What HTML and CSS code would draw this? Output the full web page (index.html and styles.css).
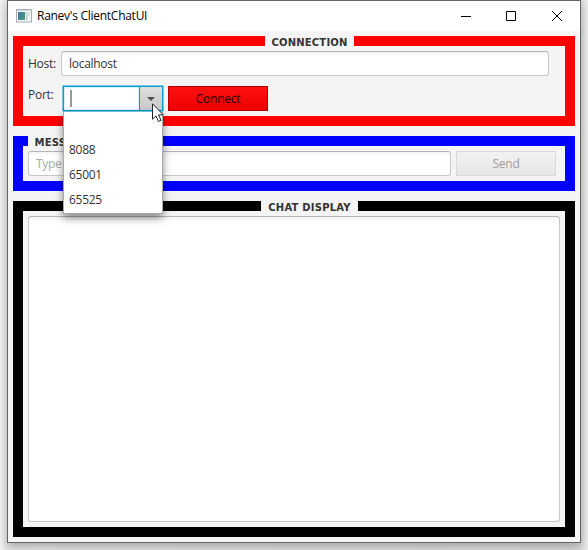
FILE: index.html
```html
<!DOCTYPE html>
<html lang="en">
<head>
<meta charset="utf-8">
<title>Ranev's ClientChatUI</title>
<link rel="stylesheet" href="styles.css">
</head>
<body>
<main class="window">
  <header class="titlebar">
    <svg class="app-icon" width="16" height="14" viewBox="0 0 16 14">
      <defs><linearGradient id="pane" x2="1" y2="1"><stop stop-color="#3f74b0"/><stop offset="1" stop-color="#4aa273"/></linearGradient></defs>
      <rect x=".5" y=".5" width="15" height="12.5" fill="#f4f5f6" stroke="#a9afb4"/>
      <path d="M1 1.5h14" stroke="#cfd6db"/>
      <rect x="2" y="3" width="7" height="8" fill="url(#pane)"/>
      <rect x="10" y="3" width="1.5" height="8" fill="#b5d3cf"/>
      <rect x="12" y="3" width="2" height="4" fill="#dfe3e6"/>
    </svg>
    <h1 class="title">Ranev's ClientChatUI</h1>
    <div class="controls">
      <svg width="10" height="10" viewBox="0 0 10 10"><path d="M0 5.5h10"/></svg>
      <svg width="10" height="10" viewBox="0 0 10 10"><path d="M.5.5h9v9h-9z"/></svg>
      <svg class="close" width="10" height="10" viewBox="0 0 10 10"><path d="M0 0l10 10M10 0L0 10"/></svg>
    </div>
  </header>
  <div class="content">
    <section class="panel connection">
      <h2 class="legend center legend-connection"><span>CONNECTION</span></h2>
      <div class="row host-row">
        <label class="label">Host:</label>
        <div class="field host">localhost</div>
      </div>
      <div class="row port-row">
        <label class="label">Port:</label>
        <div class="combo">
          <div class="combo-edit"><span class="caret"></span></div>
          <div class="combo-arrow"><svg width="8" height="4" viewBox="0 0 8 4"><path d="M0 0h8L4 4z" fill="#4f4f4f"/></svg></div>
          <ul class="popup">
            <li></li>
            <li>8088</li>
            <li>65001</li>
            <li>65525</li>
          </ul>
          <svg class="cursor" width="12" height="20" viewBox="0 0 12 20"><path d="M.5.8v15.4l3.5-3.3 2.4 5.6 2.6-1.1-2.4-5.5h4.7z" fill="#fff" stroke="#23232b"/></svg>
        </div>
        <div class="button connect">Connect</div>
      </div>
    </section>
    <section class="panel message">
      <h2 class="legend left"><span>MESSAGE</span></h2>
      <div class="row">
        <div class="field prompt">Type</div>
        <div class="button send">Send</div>
      </div>
    </section>
    <section class="panel chat">
      <h2 class="legend center legend-chat"><span>CHAT DISPLAY</span></h2>
      <div class="display"></div>
    </section>
  </div>
</main>
</body>
</html>
```
FILE: styles.css
```css
* { box-sizing: border-box; }
html { height: 100%; background: #e4e4e4; }
body {
  margin: 0;
  padding: 0 7px;
  height: 550px;
  overflow: hidden;
  background: linear-gradient(90deg, #f2f2f2, #e9e9e9 7px, #dedede 581px, #ededed);
  font: 12px/16px "Open Sans", "Noto Sans", sans-serif;
  letter-spacing: -.28px;
  color: #333;
}
h1, h2, ul { margin: 0; padding: 0; font: inherit; }
.window {
  width: 574px;
  height: 543px;
  border: 1px solid #666;
  background: #f4f4f4;
  box-shadow: 0 4px 9px rgba(0, 0, 0, .28);
}
.titlebar {
  display: flex;
  align-items: center;
  height: 30px;
  padding: 0 14px 0 8px;
  background: #fff;
  color: #000;
}
.app-icon { margin-bottom: 1px; }
.title { margin-left: 5px; white-space: nowrap; letter-spacing: -.27px; }
.controls { display: flex; gap: 35px; margin-left: auto; padding-right: 4px; }
.controls svg { fill: none; stroke: #000; }
.controls .close { margin-left: 1px; }
.content {
  display: flex;
  flex-direction: column;
  gap: 10px;
  padding: 5px;
}
.panel {
  position: relative;
  width: 562px;
  border: 10px solid;
  padding: 5px;
}
.connection { height: 90px; border-color: #f00; }
.message { height: 55px; border-color: #00f; }
.chat { height: 336px; border-color: #000; }
.legend {
  position: absolute;
  top: -10px;
  height: 13px;
  background: #f4f4f4;
  font: bold 10px/13px "DejaVu Sans", sans-serif;
  letter-spacing: .2px;
  white-space: nowrap;
  text-align: center;
}
.legend-connection { width: 89px; left: 242px; }
.legend-chat { width: 97px; left: 238px; }
.left { left: 5px; padding-left: 6.5px; }
.row { display: flex; gap: 5px; }
.label { height: 16px; margin-top: 5px; width: 28px; white-space: nowrap; }
.port-row { margin-top: 10px; }
.port-row .label { width: 30px; margin-top: 1px; }
.field, .display {
  border: 1px solid #c8c8c8;
  border-top-color: #b5b5b5;
  border-radius: 3px;
  background: linear-gradient(#f3f3f3, #fff 4px);
}
.field { height: 25px; padding: 4px 7px; }
.host { width: 488px; }
.prompt { width: 423px; color: #aaa; }
.combo {
  position: relative;
  display: flex;
  width: 100px;
  height: 25px;
  border: 1px solid #039ed3;
  box-shadow: 0 0 0 .5px #039ed3;
}
.combo-edit {
  width: 76px;
  padding: 3px 6px;
  background: #fff;
  border-right: 1px solid #039ed3;
  box-shadow: inset 0 0 0 1px #d9f1f9;
}
.caret { display: block; width: 2px; height: 17px; background: #999; }
.combo-arrow {
  display: flex;
  flex: 1;
  align-items: center;
  justify-content: center;
  background: linear-gradient(#dedede, #c8c8c8);
}
.popup {
  position: absolute;
  z-index: 2;
  top: 25px;
  left: -1px;
  width: 100px;
  height: 102px;
  border: 1px solid #aaa;
  border-top: 0;
  background: #fff;
  box-shadow: 0 4px 8px rgba(0, 0, 0, .45);
  list-style: none;
}
.popup li { height: 25px; padding: 5px; }
.cursor { position: absolute; z-index: 3; left: 88px; top: 16px; }
.button {
  width: 100px;
  height: 25px;
  border: 1px solid;
  text-align: center;
  line-height: 24px;
}
.connect {
  border-color: #b70000;
  background: linear-gradient(#ff1010, #ec0000);
  color: #1c0000;
}
.send {
  border-color: #d8d8d8;
  background: linear-gradient(#f1f1f1, #e7e7e7);
  color: #a0a0a0;
}
.display { width: 532px; height: 306px; }
```
